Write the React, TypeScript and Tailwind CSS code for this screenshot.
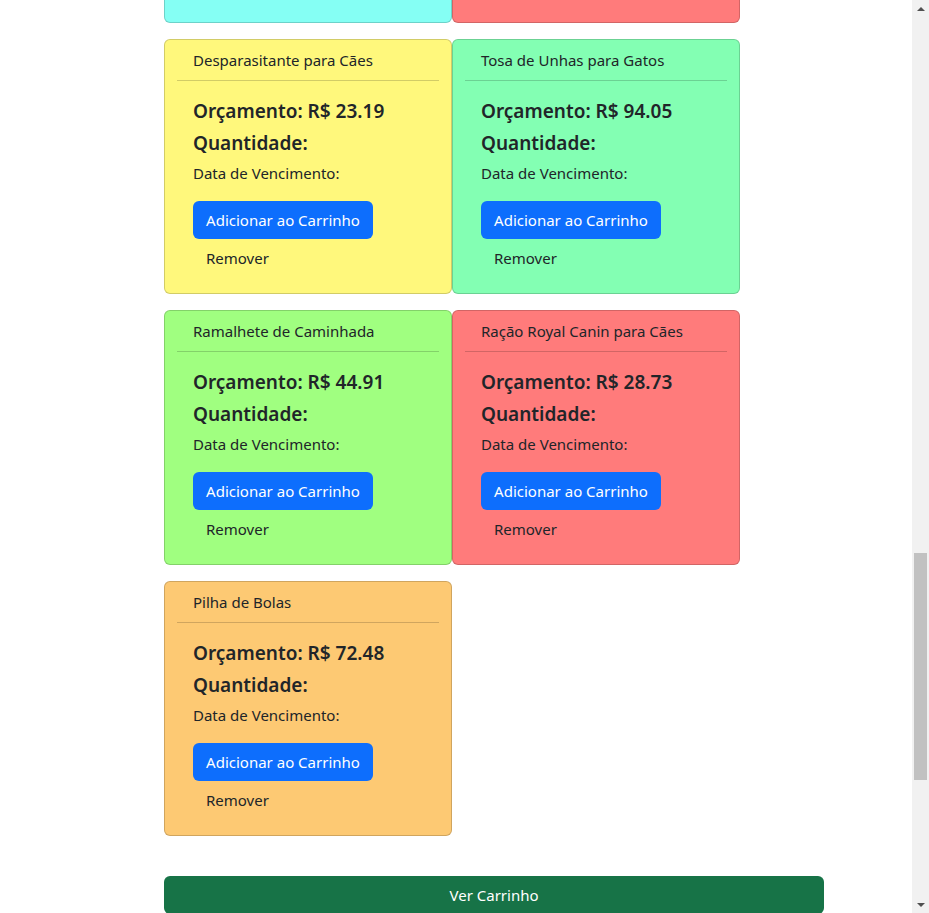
import React from "react";

interface Product {
  name: string;
  price: string;
  bg: string;
}

const rows: Product[][] = [
  [
    { name: "Desparasitante para Cães", price: "23.19", bg: "bg-[#fff87c]" },
    { name: "Tosa de Unhas para Gatos", price: "94.05", bg: "bg-[#83ffb3]" }
  ],
  [
    { name: "Ramalhete de Caminhada", price: "44.91", bg: "bg-[#a0ff80]" },
    { name: "Ração Royal Canin para Cães", price: "28.73", bg: "bg-[#ff7b7b]" }
  ],
  [{ name: "Pilha de Bolas", price: "72.48", bg: "bg-[#fdc973]" }]
];

function ProductCard({ product }: { product: Product }) {
  return (
    <div
      className={`w-[288px] h-[255px] rounded-[6px] border border-black/[0.175] px-[12px] ${product.bg}`}
    >
      <div className="h-[41px] border-b border-black/[0.175] pl-[16px] flex items-center text-[15px] pt-[1px]">
        {product.name}
      </div>
      <div className="pl-[16px]">
        <div className="mt-[18px] h-[24px] leading-[24px] text-[19px] font-semibold">
          Orçamento: R$ {product.price}
        </div>
        <div className="mt-[8px] h-[24px] leading-[24px] text-[19px] font-semibold">
          Quantidade:
        </div>
        <div className="mt-[7px] h-[22px] leading-[22px] text-[15px]">
          Data de Vencimento:
        </div>
        <button className="mt-[17px] h-[38px] w-[180px] rounded-[6px] bg-[#0d6efd] text-white text-[15px]">
          Adicionar ao Carrinho
        </button>
        <div className="mt-[7px] h-[24px] leading-[24px] pl-[13px] text-[15px]">
          Remover
        </div>
      </div>
    </div>
  );
}

export default function App() {
  return (
    <div
      className="flex h-[913px] overflow-hidden bg-white text-[#212529]"
      style={{ fontFamily: '"Noto Sans", "Open Sans", sans-serif' }}
    >
      <main className="flex-1 pl-[164px]">
        {/* tail of the row above */}
        <div className="flex">
          <div className="w-[288px] h-[23px] rounded-b-[6px] border border-t-0 border-black/[0.175] bg-[#85fff4]" />
          <div className="w-[288px] h-[23px] rounded-b-[6px] border border-t-0 border-black/[0.175] bg-[#ff7b7b]" />
        </div>

        <div className="mt-[16px] flex flex-col gap-[16px]">
          {rows.map((row, i) => (
            <div key={i} className="flex">
              {row.map(p => (
                <ProductCard key={p.name} product={p} />
              ))}
            </div>
          ))}
        </div>

        <button className="mt-[40px] w-[660px] h-[38px] rounded-[6px] bg-[#177347] text-white text-[15px]">
          Ver Carrinho
        </button>
      </main>

      {/* scrollbar */}
      <div className="w-[17px] bg-[#f1f1f1] flex flex-col items-center">
        <div className="h-[17px] flex items-center justify-center">
          <div className="w-0 h-0 border-l-[4px] border-r-[4px] border-b-[4px] border-l-transparent border-r-transparent border-b-[#505050]" />
        </div>
        <div className="mt-[536px] w-[13px] h-[227px] bg-[#c1c1c1]" />
        <div className="flex-1" />
        <div className="h-[17px] flex items-center justify-center">
          <div className="w-0 h-0 border-l-[4px] border-r-[4px] border-t-[4px] border-l-transparent border-r-transparent border-t-[#505050]" />
        </div>
      </div>
    </div>
  );
}
